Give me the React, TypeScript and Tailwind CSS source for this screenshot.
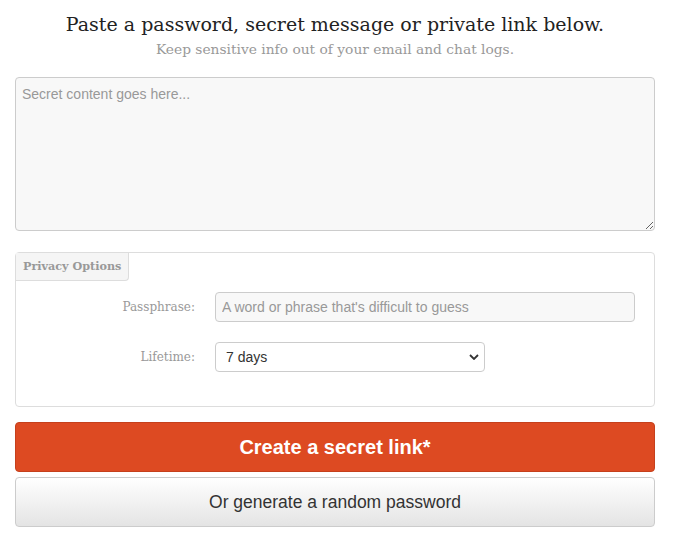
import { useState } from "react";

export default function App() {
  const [secret, setSecret] = useState("");
  const [passphrase, setPassphrase] = useState("");
  const [lifetime, setLifetime] = useState("7d");

  return (
    <div className="min-h-screen bg-white pt-[9px] font-['Liberation_Sans',Arial,sans-serif]">
      <div className="ml-[15px] w-[640px]">
        <div className="text-center font-['DejaVu_Serif',Georgia,serif]">
          <h1 className="text-[19px] leading-[30px] text-[#222]">
            Paste a password, secret message or private link below.
          </h1>
          <p className="text-[13.8px] leading-[20px] text-[#999]">
            Keep sensitive info out of your email and chat logs.
          </p>
        </div>

        <textarea
          value={secret}
          onChange={(e) => setSecret(e.target.value)}
          placeholder="Secret content goes here..."
          className="mt-[18px] block h-[154px] w-full resize-y rounded-[4px] border border-[#ccc] bg-[#f8f8f8] px-[6px] py-[6px] text-[14px] text-[#555] placeholder:text-[#999] outline-none"
        />

        <fieldset className="mt-[21px] h-[155px] rounded-[4px] border border-[#ddd] bg-white">
          <div className="inline-block rounded-br-[4px] border-r border-b border-[#ddd] bg-[#f5f5f5] px-[7px] py-[4px] font-['DejaVu_Serif',Georgia,serif] text-[11.2px] font-bold leading-[19px] text-[#999]">
            Privacy Options
          </div>

          <div className="mt-[11px] flex flex-col gap-[20px]">
            <div className="flex items-center">
              <label className="w-[199px] pr-[20px] text-right font-['DejaVu_Serif',Georgia,serif] text-[12px] text-[#999]">
                Passphrase:
              </label>
              <input
                value={passphrase}
                onChange={(e) => setPassphrase(e.target.value)}
                placeholder="A word or phrase that's difficult to guess"
                className="h-[30px] w-[420px] rounded-[4px] border border-[#ccc] bg-[#f8f8f8] px-[6px] text-[14px] text-[#555] placeholder:text-[#999] outline-none"
              />
            </div>
            <div className="flex items-center">
              <label className="w-[199px] pr-[20px] text-right font-['DejaVu_Serif',Georgia,serif] text-[12px] text-[#999]">
                Lifetime:
              </label>
              <div className="relative w-[270px]">
                <select
                  value={lifetime}
                  onChange={(e) => setLifetime(e.target.value)}
                  className="h-[30px] w-full appearance-none rounded-[4px] border border-[#ccc] bg-white pl-[10px] text-[14px] text-[#333] outline-none"
                >
                  <option value="7d">7 days</option>
                  <option value="3d">3 days</option>
                  <option value="1d">1 day</option>
                </select>
                <svg
                  viewBox="0 0 10 6"
                  className="pointer-events-none absolute top-[12px] right-[6px] h-[6px] w-[10px]"
                >
                  <path d="M1 1l4 4 4-4" fill="none" stroke="#333" strokeWidth="1.8" />
                </svg>
              </div>
            </div>
          </div>
        </fieldset>

        <button
          type="button"
          className="mt-[15px] block h-[50px] w-full rounded-[4px] border border-[#c5401c] bg-[#dd4a22] text-[20px] font-bold text-white"
        >
          Create a secret link*
        </button>
        <button
          type="button"
          className="mt-[5px] block h-[50px] w-full rounded-[4px] border border-[#ccc] bg-gradient-to-b from-white to-[#e4e4e4] text-[17.5px] text-[#333]"
        >
          Or generate a random password
        </button>
      </div>
    </div>
  );
}
